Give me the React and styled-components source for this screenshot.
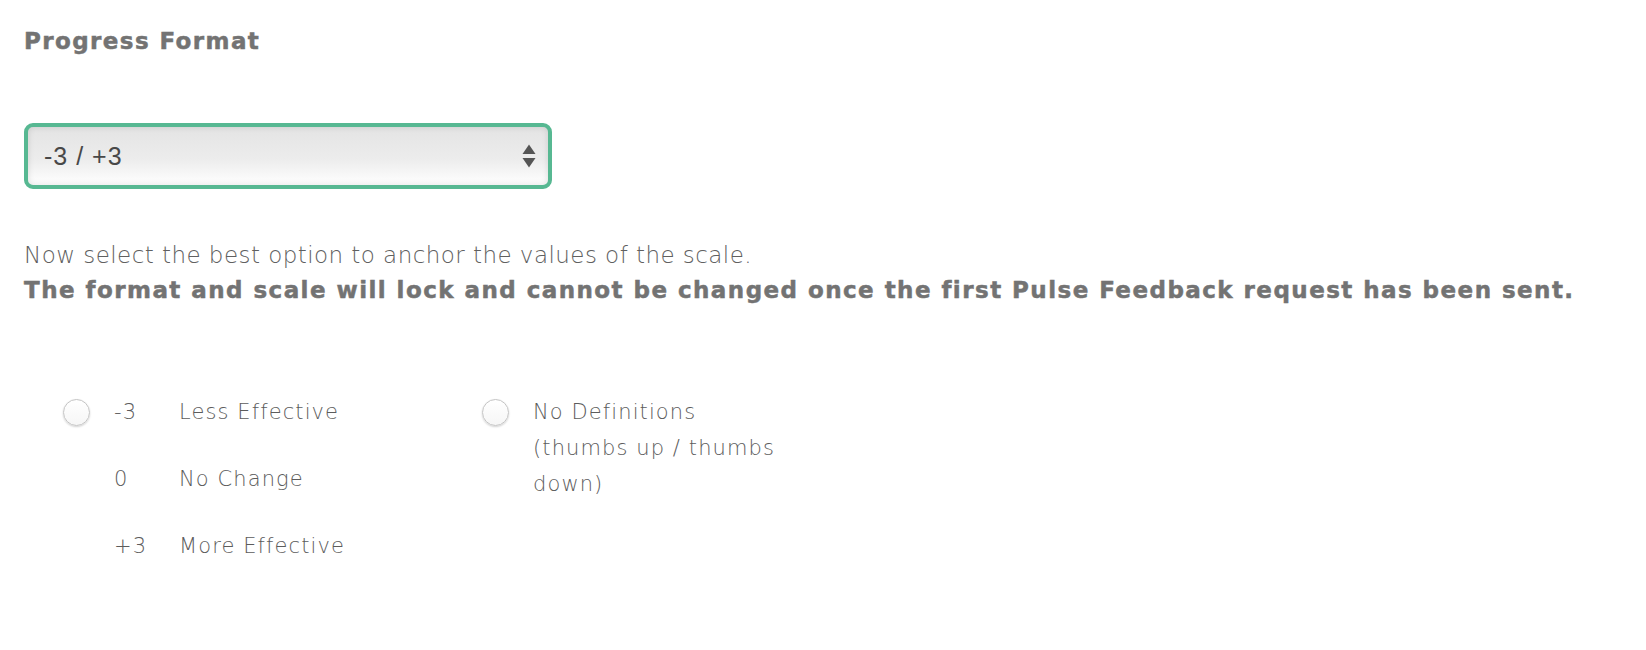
import styled, { createGlobalStyle } from "styled-components";

const GlobalStyle = createGlobalStyle`
  body {
    margin: 0;
    background: #ffffff;
    font-family: "DejaVu Sans", "Open Sans", sans-serif;
    color: #757575;
  }
`;

const Page = styled.div`
  padding: 23px 24px 0 24px;
`;

const Heading = styled.h2`
  margin: 0;
  font-family: "DejaVu Sans", "Liberation Sans", sans-serif;
  font-weight: 700;
  font-size: 23px;
  line-height: 36px;
  color: #737373;
  letter-spacing: 1.4px;
  -webkit-text-stroke: 0.5px #737373;
`;

const SelectWrap = styled.div`
  margin-top: 64px;
  width: 528px;
  height: 66px;
  box-sizing: border-box;
  border: 4px solid #57b892;
  border-radius: 9px;
  background: linear-gradient(to bottom, #e4e4e4 0%, #ececec 55%, #ffffff 100%);
  box-shadow: inset 0 0 6px rgba(0, 0, 0, 0.12);
  display: flex;
  align-items: center;
  padding: 0 12px 0 16px;
`;

const SelectValue = styled.span`
  flex: 1;
  font-family: "Liberation Sans", Arial, sans-serif;
  font-size: 25px;
  letter-spacing: 1px;
  color: #484848;
`;

const Arrows = styled.svg`
  width: 14px;
  height: 24px;
`;

const Intro = styled.div`
  margin-top: 49px;
  line-height: 35px;
`;

const Light = styled.p`
  margin: 0;
  font-size: 23px;
  font-weight: 200;
  letter-spacing: 0.45px;
  color: #606060;
`;

const Strong = styled.p`
  margin: 0;
  font-weight: 700;
  font-size: 23px;
  color: #737373;
  letter-spacing: 1.45px;
  -webkit-text-stroke: 0.5px #737373;
`;

const Options = styled.div`
  display: flex;
  margin-top: 86px;
  padding-left: 39px;
`;

const Group = styled.div`
  display: flex;
  align-items: flex-start;
  gap: 24px;
  width: ${(p) => p.$width}px;
`;

const Radio = styled.span`
  flex: none;
  width: 27px;
  height: 27px;
  margin-top: 5px;
  box-sizing: border-box;
  border-radius: 50%;
  border: 1px solid #c4c4c4;
  background: linear-gradient(to bottom, #ffffff 0%, #f6f6f6 100%);
  box-shadow: 0 1px 2px rgba(0, 0, 0, 0.18);
`;

const Scale = styled.div`
  display: grid;
  grid-template-columns: 65px auto;
  row-gap: 31px;
  font-size: 21px;
  line-height: 36px;
  font-weight: 200;
  letter-spacing: 1.1px;
  color: #5c5c5c;
`;

const Wrapped = styled.div`
  width: 262px;
  font-size: 21px;
  line-height: 36px;
  font-weight: 200;
  letter-spacing: 1.1px;
  color: #5c5c5c;
`;

const rows = [
  ["-3", "Less Effective"],
  ["0", "No Change"],
  ["+3", "More Effective"],
];

export default function App() {
  return (
    <>
      <GlobalStyle />
      <Page>
        <Heading>Progress Format</Heading>
        <SelectWrap>
          <SelectValue>-3 / +3</SelectValue>
          <Arrows viewBox="0 0 14 24">
            <path d="M7 0.5 L13.5 10 H0.5 Z" fill="#555" />
            <path d="M7 23.5 L13.5 14 H0.5 Z" fill="#555" />
          </Arrows>
        </SelectWrap>
        <Intro>
          <Light>Now select the best option to anchor the values of the scale.</Light>
          <Strong>
            The format and scale will lock and cannot be changed once the first Pulse Feedback
            request has been sent.
          </Strong>
        </Intro>
        <Options>
          <Group $width={419}>
            <Radio />
            <Scale>
              {rows.map(([n, label]) => (
                <>
                  <span key={n}>{n}</span>
                  <span key={label}>{label}</span>
                </>
              ))}
            </Scale>
          </Group>
          <Group $width={400}>
            <Radio />
            <Wrapped>No Definitions (thumbs up / thumbs down)</Wrapped>
          </Group>
        </Options>
      </Page>
    </>
  );
}
